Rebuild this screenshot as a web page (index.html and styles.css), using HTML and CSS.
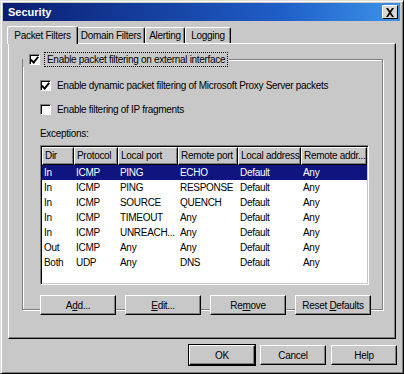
FILE: index.html
```html
<!doctype html>
<html lang="en">
<head>
  <meta charset="utf-8">
  <title>Security</title>
  <link rel="stylesheet" href="styles.css">
</head>
<body>
  <div class="window">
    <div class="titlebar">
      <span class="title">Security</span>
      <span class="close">
        <svg width="10" height="9" viewBox="0 0 10 9"><path d="M1 0h2l2 3 2-3h2L6 4.5 9 9H7L5 6 3 9H1l3-4.5z" fill="#000"/></svg>
      </span>
    </div>

    <div class="tabs">
      <div class="tab active">Packet Filters</div>
      <div class="tab domain">Domain Filters</div>
      <div class="tab alerting">Alerting</div>
      <div class="tab logging">Logging</div>
    </div>

    <div class="panel">
      <fieldset class="group">
        <legend>
          <span class="check checked"></span>
          <span class="focus">Enable packet filtering on external interface</span>
        </legend>

        <div class="option">
          <span class="check checked"></span>
          <span>Enable dynamic packet filtering of Microsoft Proxy Server packets</span>
        </div>
        <div class="option">
          <span class="check"></span>
          <span>Enable filtering of IP fragments</span>
        </div>

        <div class="label">Exceptions:</div>

        <div class="list">
          <div class="row head">
            <span>Dir</span><span>Protocol</span><span>Local port</span><span>Remote port</span><span>Local address</span><span>Remote addr...</span>
          </div>
          <div class="row selected">
            <span>In</span><span>ICMP</span><span>PING</span><span>ECHO</span><span>Default</span><span>Any</span>
          </div>
          <div class="row">
            <span>In</span><span>ICMP</span><span>PING</span><span>RESPONSE</span><span>Default</span><span>Any</span>
          </div>
          <div class="row">
            <span>In</span><span>ICMP</span><span>SOURCE</span><span>QUENCH</span><span>Default</span><span>Any</span>
          </div>
          <div class="row">
            <span>In</span><span>ICMP</span><span>TIMEOUT</span><span>Any</span><span>Default</span><span>Any</span>
          </div>
          <div class="row">
            <span>In</span><span>ICMP</span><span>UNREACH...</span><span>Any</span><span>Default</span><span>Any</span>
          </div>
          <div class="row">
            <span>Out</span><span>ICMP</span><span>Any</span><span>Any</span><span>Default</span><span>Any</span>
          </div>
          <div class="row">
            <span>Both</span><span>UDP</span><span>Any</span><span>DNS</span><span>Default</span><span>Any</span>
          </div>
        </div>

        <div class="actions">
          <button class="btn">A<u>d</u>d...</button>
          <button class="btn"><u>E</u>dit...</button>
          <button class="btn">Re<u>m</u>ove</button>
          <button class="btn">Reset <u>D</u>efaults</button>
        </div>
      </fieldset>
    </div>

    <div class="footer">
      <button class="btn default">OK</button>
      <button class="btn">Cancel</button>
      <button class="btn">Help</button>
    </div>
  </div>
</body>
</html>
```

FILE: styles.css
```css
html {
  font-family: "Liberation Sans", Arial, sans-serif;
  font-size: 10px;
  letter-spacing: -0.3px;
}

body {
  margin: 0;
  background: #c8c8c8;
}

.window {
  width: 404px;
  height: 374px;
  box-sizing: border-box;
  background: #c8c8c8;
  border: 1px solid;
  border-color: #e0e0e0 #000 #000 #e0e0e0;
  box-shadow: inset 1px 1px 0 #fff, inset -1px -1px 0 #808080;
  padding: 2px 3px 2px 2px;
  display: flex;
  flex-direction: column;
}

.titlebar {
  height: 18px;
  display: flex;
  align-items: center;
  justify-content: space-between;
  padding: 0 2px 0 5px;
  background: linear-gradient(90deg, #0a1d70, #1f5ec8 70%, #3c94e8);
  color: #fff;
}

.title {
  font-weight: bold;
  font-size: 11px;
  letter-spacing: 0;
}

.close {
  width: 14px;
  height: 12px;
  display: flex;
  align-items: center;
  justify-content: center;
  background: #d8d8d0;
  border: 1px solid;
  border-color: #fff #000 #000 #fff;
}

/* tabs */
.tabs {
  display: flex;
  align-items: flex-end;
  height: 20px;
  margin-top: 2px;
  padding-left: 6px;
}

.tab {
  height: 15px;
  line-height: 15px;
  text-align: center;
  border: 1px solid;
  border-bottom: none;
  border-color: #fff #000 #000 #fff;
  box-shadow: inset -1px 0 0 #808080;
  border-radius: 2px 2px 0 0;
}

.tab.active {
  width: 69px;
  height: 17px;
  line-height: 17px;
  margin: 0 -1px -1px -2px;
  position: relative;
  z-index: 1;
  background: #c8c8c8;
}

.tab.domain {
  width: 66px;
}

.tab.alerting {
  width: 38px;
}

.tab.logging {
  width: 44px;
}

.panel {
  height: 296px;
  box-sizing: border-box;
  margin: 0 4px 0 5px;
  border: 1px solid;
  border-color: #fff #000 #000 #fff;
  box-shadow: inset -1px -1px 0 #808080;
  padding: 8px 12px 0 13px;
}

/* group box */
.group {
  margin: 0;
  height: 256px;
  padding: 0 0 0 17px;
  border: 1px solid #808080;
  box-shadow: inset 1px 1px 0 #fff, 1px 1px 0 #fff;
}

.group legend {
  display: flex;
  align-items: center;
  padding: 0 1px 0 6px;
  margin-left: -17px;
  background: #c8c8c8;
}

.focus {
  margin-left: 4px;
  padding: 1px 2px;
  border: 1px dotted #000;
}

.check {
  width: 9px;
  height: 9px;
  flex: none;
  background: #fff;
  border: 1px solid;
  border-color: #808080 #fff #fff #808080;
  box-shadow: inset 1px 1px 0 #000;
  position: relative;
}

.check.checked::after {
  content: "";
  position: absolute;
  left: 2px;
  top: 0px;
  width: 3px;
  height: 6px;
  border: solid #000;
  border-width: 0 2px 2px 0;
  transform: rotate(40deg);
}

.option {
  display: flex;
  align-items: center;
  gap: 6px;
  margin-top: 12px;
  height: 13px;
}

.option + .option {
  margin-top: 11px;
}

.label {
  margin-top: 12px;
  height: 13px;
}

/* list view */
.list {
  margin-top: 4px;
  width: 329px;
  height: 140px;
  box-sizing: border-box;
  background: #fff;
  border: 1px solid;
  border-color: #808080 #fff #fff #808080;
  box-shadow: inset 1px 1px 0 #000, inset -1px -1px 0 #c8c8c8;
  padding: 1px 1px 0 1px;
}

.row {
  display: grid;
  grid-template-columns: 32px 44px 60px 60px 63px 1fr;
  height: 15px;
  line-height: 15px;
}

.row span {
  padding-left: 2px;
  white-space: nowrap;
  overflow: hidden;
}

.row.head {
  height: 18px;
  line-height: 18px;
  background: #c8c8c8;
}

.row.head span {
  border: 1px solid;
  border-color: #fff #000 #000 #fff;
  box-shadow: inset -1px -1px 0 #808080;
  line-height: 16px;
}

.row.selected {
  background: #10147e;
  color: #fff;
}

/* buttons */
.actions {
  display: flex;
  gap: 9px;
  margin-top: 10px;
}

.btn {
  font: inherit;
  letter-spacing: inherit;
  color: #000;
  width: 76px;
  height: 20px;
  padding: 0;
  background: #c8c8c8;
  border: 1px solid;
  border-color: #fff #000 #000 #fff;
  box-shadow: inset -1px -1px 0 #808080;
}

.footer {
  display: flex;
  justify-content: flex-end;
  gap: 5px;
  padding: 6px 3px 0 0;
}

.footer .btn {
  width: 66px;
}

.btn.default {
  outline: 1px solid #000;
  outline-offset: 0;
}
```
